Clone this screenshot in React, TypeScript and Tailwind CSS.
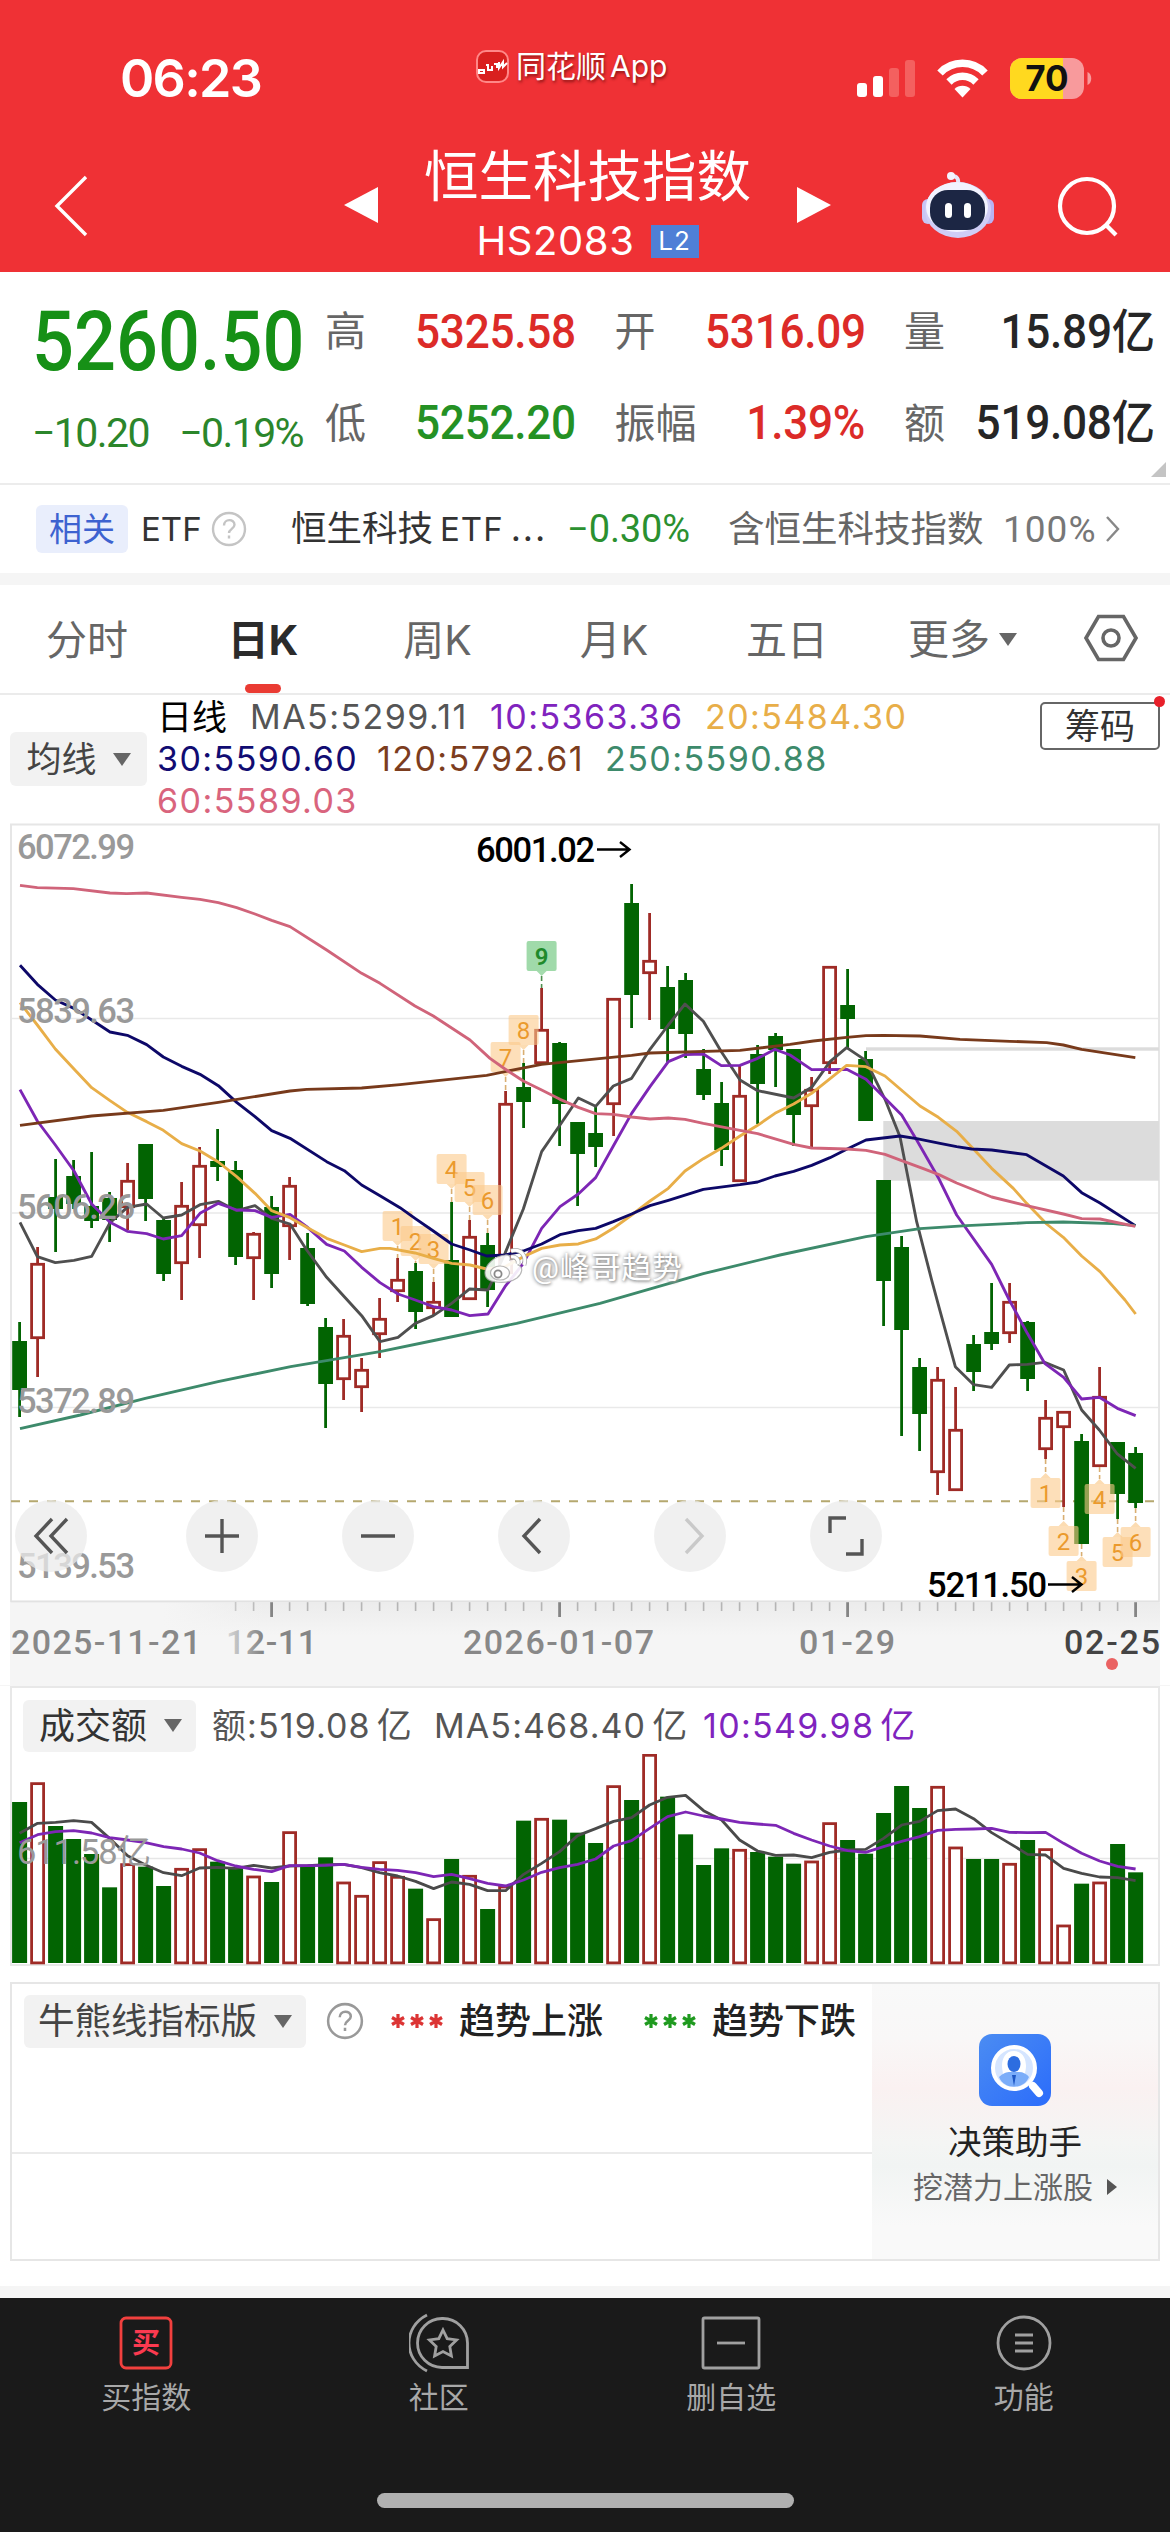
import React from "react";

type Candle = [up: 0 | 1, high: number, top: number, bottom: number, low: number];

const candles: Candle[] = [
  [0, 1322, 1341, 1390, 1417], [1, 1247, 1263, 1339, 1377], [0, 1159, 1197, 1209, 1252], [0, 1160, 1176, 1204, 1209],
  [0, 1152, 1206, 1221, 1228], [0, 1192, 1198, 1220, 1242], [1, 1163, 1180, 1208, 1230], [0, 1144, 1144, 1199, 1221],
  [0, 1217, 1220, 1274, 1281], [1, 1182, 1205, 1264, 1300], [1, 1147, 1165, 1226, 1258], [0, 1129, 1161, 1167, 1181],
  [0, 1161, 1170, 1257, 1265], [1, 1232, 1233, 1259, 1300], [0, 1196, 1207, 1274, 1288], [1, 1177, 1185, 1227, 1260],
  [0, 1233, 1248, 1304, 1306], [0, 1318, 1327, 1384, 1428], [1, 1319, 1335, 1380, 1400], [1, 1358, 1369, 1388, 1412],
  [1, 1298, 1318, 1335, 1358], [1, 1258, 1279, 1292, 1302], [0, 1263, 1271, 1312, 1329], [1, 1282, 1301, 1309, 1315],
  [0, 1202, 1260, 1317, 1317], [1, 1220, 1236, 1300, 1300], [0, 1233, 1245, 1290, 1307], [1, 1091, 1103, 1274, 1274],
  [0, 1063, 1087, 1102, 1128], [1, 988, 1029, 1064, 1064], [0, 1042, 1043, 1104, 1146], [0, 1122, 1122, 1154, 1206],
  [0, 1107, 1133, 1147, 1167], [1, 998, 998, 1105, 1136], [0, 884, 903, 995, 1028], [1, 913, 960, 974, 1020],
  [0, 966, 987, 1029, 1062], [0, 973, 980, 1034, 1058], [0, 1049, 1069, 1095, 1100], [0, 1082, 1103, 1150, 1166],
  [1, 1065, 1095, 1182, 1182], [0, 1045, 1054, 1084, 1124], [0, 1033, 1036, 1050, 1087], [0, 1049, 1049, 1115, 1146],
  [1, 1077, 1089, 1107, 1147], [1, 966, 966, 1064, 1074], [0, 969, 1005, 1019, 1048], [0, 1051, 1059, 1121, 1121],
  [0, 1180, 1180, 1281, 1326], [0, 1236, 1247, 1330, 1436], [0, 1358, 1367, 1414, 1451], [1, 1367, 1379, 1473, 1495],
  [1, 1387, 1429, 1491, 1491], [0, 1335, 1344, 1372, 1391], [0, 1283, 1332, 1344, 1350], [1, 1283, 1301, 1334, 1343],
  [0, 1321, 1322, 1379, 1391], [1, 1400, 1417, 1450, 1459], [1, 1411, 1411, 1428, 1507], [0, 1434, 1441, 1544, 1544],
  [1, 1367, 1396, 1467, 1467], [0, 1442, 1442, 1494, 1519], [0, 1447, 1453, 1503, 1508],
];

const volumes = [
  366, 307, 438, 477, 522, 622, 550, 560, 618, 564, 505, 545, 565, 587, 606, 454, 560, 532, 605, 645, 544, 588, 626, 715,
  537, 585, 687, 617, 422, 414, 419, 458, 489, 316, 360, 222, 350, 463, 555, 505, 507, 516, 530, 551, 542, 427, 480, 521,
  399, 318, 384, 318, 500, 537, 537, 549, 480, 505, 734, 611, 605, 492, 577,
];
const volMa5 = [
  460, 430, 427, 422, 427, 475, 527, 555, 578, 587, 564, 562, 565, 556, 564, 558, 557, 554, 553, 563, 578, 588, 604, 626,
  606, 613, 632, 632, 583, 550, 515, 467, 446, 424, 413, 375, 352, 346, 392, 420, 480, 513, 526, 525, 533, 517, 510, 508,
  475, 435, 424, 392, 387, 416, 458, 490, 523, 525, 565, 580, 591, 593, 602,
];
const volMa10 = [
  488, 464, 455, 452, 459, 473, 480, 488, 500, 507, 519, 542, 558, 568, 575, 557, 557, 556, 553, 562, 568, 571, 578, 590,
  583, 596, 610, 618, 600, 577, 563, 553, 537, 498, 482, 445, 410, 396, 408, 417, 427, 432, 436, 460, 480, 498, 512, 517,
  500, 484, 470, 451, 448, 447, 445, 457, 458, 457, 490, 520, 543, 559, 567,
];

const averages: { color: string; points: string }[] = [
  { color: "#4f4f4f", points: "60,1207 112,1310 166,1328 222,1321 275,1309 330,1208 382,1162 440,1152 490,1194 545,1185 600,1154 655,1144 710,1172 765,1157 815,1195 870,1212 920,1290 980,1372 1033,1430 1085,1487 1140,1565 1194,1552 1246,1510 1300,1487 1355,1450 1409,1407 1464,1410 1515,1300 1570,1167 1625,995 1680,915 1735,834 1787,859 1840,798 1895,775 1950,688 2005,615 2055,552 2110,604 2164,695 2220,780 2273,812 2381,834 2435,802 2490,725 2540,683 2598,722 2655,838 2700,950 2750,1205 2795,1380 2818,1465 2866,1640 2921,1694 2975,1702 3028,1635 3082,1633 3134,1627 3191,1650 3245,1770 3298,1830 3352,1902 3407,1945" },
  { color: "#7d26b5", points: "60,809 112,903 166,975 222,1053 275,1152 330,1207 382,1234 440,1241 490,1257 545,1247 600,1180 655,1150 710,1170 765,1172 815,1192 870,1183 920,1220 980,1273 1033,1293 1085,1342 1140,1388 1194,1422 1246,1440 1300,1460 1355,1470 1409,1487 1464,1482 1515,1400 1570,1330 1625,1225 1680,1160 1735,1122 1787,1073 1840,978 1895,880 1950,800 2005,725 2055,704 2110,702 2164,737 2220,736 2273,715 2325,688 2370,705 2435,749 2540,748 2598,778 2655,835 2705,885 2750,960 2815,1073 2870,1185 2975,1333 3028,1440 3082,1540 3134,1630 3191,1672 3245,1737 3298,1732 3352,1765 3407,1787" },
  { color: "#e8ae48", points: "60,548 112,615 166,687 222,747 275,803 330,842 382,877 440,905 490,931 545,971 600,993 655,1026 710,1070 765,1120 815,1172 870,1193 920,1222 980,1255 1033,1275 1085,1295 1140,1285 1170,1285 1245,1299 1300,1315 1355,1330 1410,1335 1460,1347 1515,1340 1570,1310 1625,1285 1680,1275 1735,1272 1787,1257 1840,1225 1895,1185 1950,1143 2005,1105 2055,1053 2110,1016 2164,985 2220,948 2273,916 2325,880 2381,852 2435,820 2540,736 2598,740 2655,768 2760,858 2815,892 2870,934 2975,1045 3040,1105 3080,1150 3140,1212 3190,1252 3245,1308 3300,1355 3375,1440 3407,1482" },
  { color: "#0d0868", points: "60,436 112,493 166,540 222,565 330,636 382,646 440,674 490,711 545,739 600,763 655,797 710,847 765,890 815,932 870,955 980,1025 1033,1052 1085,1095 1140,1127 1200,1163 1245,1195 1300,1233 1355,1272 1410,1290 1460,1308 1515,1305 1570,1293 1625,1272 1680,1244 1735,1232 1787,1225 1840,1205 1895,1182 1950,1157 2005,1141 2110,1108 2220,1094 2273,1086 2325,1068 2381,1054 2435,1036 2490,1013 2540,988 2598,960 2700,948 2750,956 2820,970 2870,980 2915,987 2975,990 3080,1004 3190,1068 3245,1118 3300,1149 3406,1217" },
  { color: "#783a1b", points: "60,916 275,888 490,871 655,847 870,813 920,808 1085,804 1200,794 1460,766 1625,733 1895,706 1950,699 2220,691 2370,673 2440,663 2540,652 2598,647 2650,646 2760,648 2880,658 3030,664 3140,668 3190,675 3245,688 3406,713" },
  { color: "#3d8a6b", points: "60,1826 241,1785 436,1735 654,1685 872,1640 1140,1595 1309,1560 1550,1510 1800,1450 2110,1361 2340,1305 2598,1250 2760,1226 2900,1217 3080,1208 3190,1206 3340,1211 3406,1217" },
  { color: "#d0647a", points: "60,196 112,203 220,206 330,219 380,221 440,219 545,232 600,238 655,248 710,263 765,282 815,301 870,320 980,390 1085,460 1140,490 1245,558 1300,588 1410,660 1470,715 1515,747 1570,783 1625,810 1680,838 1735,862 1787,881 1840,883 1895,891 1950,897 2005,894 2055,898 2110,910 2220,931 2273,941 2381,973 2435,984 2540,987 2598,991 2655,1003 2705,1022 2770,1046 2815,1063 2870,1089 2975,1131 3080,1157 3190,1182 3245,1196 3300,1197 3406,1219" },
];

const GREEN = "#026402";
const RED = "#9f2b26";
const barX = (i: number) => 19.6 + 18 * i;

const tags: [index: number, label: string, y: number, below: boolean][] = [
  [21, "1", 1226, false], [22, "2", 1241, false], [23, "3", 1249, false], [24, "4", 1169, false], [25, "5", 1187, false],
  [26, "6", 1200, false], [27, "7", 1057, false], [28, "8", 1030, false], [29, "9", 956, false],
  [57, "1", 1493, true], [58, "2", 1541, true], [59, "3", 1576, true], [60, "4", 1499, true], [61, "5", 1552, true], [62, "6", 1542, true],
];

function Tag({ index, label, y, below }: { index: number; label: string; y: number; below: boolean }) {
  const x = barX(index);
  const green = label === "9";
  const c = candles[index];
  const pointer = below ? `M${x - 5} ${y - 15}l5 -5l5 5z` : `M${x - 5} ${y + 15}l5 5l5 -5z`;
  return (
    <g>
      <path
        d={below ? `M${x} ${c[4]}V${y - 20}` : `M${x} ${y + 20}V${c[1]}`}
        stroke={green ? "#4d8f4d" : "#d9ae72"} strokeWidth="1.6" strokeDasharray="5 3"
      />
      <rect x={x - 15} y={y - 15} width="30" height="30" rx="2" fill={green ? "#8fd49b" : "#fbc98a"} fillOpacity={green ? 0.85 : 0.6} />
      <path d={pointer} fill={green ? "#a5dcae" : "#fcdcb2"} />
      <text x={x} y={y + 8.5} textAnchor="middle" fontSize="24" fontWeight={green ? 600 : 400} fill={green ? "#1f8a2b" : "#eb9a2d"}>{label}</text>
    </g>
  );
}

function PriceChart() {
  const axis: [string, number][] = [["6072.99", 858.5], ["5839.63", 1023], ["5606.26", 1218.5], ["5372.89", 1412.5], ["5139.53", 1577.5]];
  return (
    <svg className="block h-[865px] w-full font-['Roboto','Noto_Sans_CJK_SC',sans-serif]" viewBox="0 820 1170 865">
      <defs>
        <linearGradient id="strip" x1="0" y1="0" x2="0" y2="1">
          <stop offset="0" stopColor="#ececec" />
          <stop offset="0.4" stopColor="#f5f5f5" />
        </linearGradient>
        <linearGradient id="stripFade">
          <stop offset="0.6" stopColor="#f5f5f5" />
          <stop offset="1" stopColor="#f5f5f5" stopOpacity="0" />
        </linearGradient>
        <linearGradient id="dateFade" x1="0" y1="0" x2="1" y2="0">
          <stop offset="0" stopColor="#dadada" />
          <stop offset="0.4" stopColor="#858585" />
        </linearGradient>
      </defs>
      <rect x="11" y="824.5" width="1148" height="777" fill="#fff" stroke="#e6e6e6" strokeWidth="2" />
      <path d="M12 1018.5H1158M12 1213H1158M12 1407.5H1158" stroke="#e9e9e9" strokeWidth="1.5" />
      <rect x="866" y="1047.3" width="293" height="3.4" fill="#dcdcdc" />
      <rect x="883.3" y="1121" width="275.7" height="59.7" fill="#dcdcdc" />
      <path d="M11 1501.3H1158" stroke="#b5a86f" strokeWidth="2" strokeDasharray="9 9" />

      {candles.map(([up, high, top, bottom, low], i) => {
        const x = barX(i);
        return up ? (
          <g key={i} stroke={RED}>
            <path d={`M${x} ${high}V${top + 1}M${x} ${bottom - 1}V${low}`} strokeWidth="2.8" />
            <rect x={x - 6} y={top + 1.3} width="12" height={bottom - top - 2.6} fill="#fff" strokeWidth="2.8" />
          </g>
        ) : (
          <g key={i} fill={GREEN}>
            <rect x={x - 1.4} y={high} width="2.8" height={low - high} />
            <rect x={x - 7.4} y={top} width="14.8" height={bottom - top} />
          </g>
        );
      })}

      {tags.map(([index, label, y, below]) => <Tag key={`${index}`} index={index} label={label} y={y} below={below} />)}

      <g transform="translate(0 820) scale(0.33333)" fill="none" strokeWidth="8.600" strokeLinejoin="round">
        {averages.map((a) => <polyline key={a.color} points={a.points} stroke={a.color} />)}
      </g>

      <g fontSize="34.5" fontWeight="500" fill="#999">
        {axis.map(([label, y]) => <text key={label} x="17" y={y} textLength="118">{label}</text>)}
      </g>

      <g fontSize="34.5" fontWeight="500" fill="#000">
        <text x="476" y="861.5" textLength="119">6001.02</text>
        <text x="927" y="1596.5" textLength="120">5211.50</text>
      </g>
      <path d="M597 849.5H629M620 842L629.5 849.5L620 857M1048 1584.5H1081M1072 1577L1081.5 1584.5L1072 1592" stroke="#000" strokeWidth="2.4" fill="none" />

      <g>
        <g fill="#fff" fillOpacity="0.9" stroke="#a5a5a5" strokeOpacity="0.8" strokeWidth="1.2">
          <path d="M485 1273c0-8 9-17 20-18 4-1 6 2 5 5 5-2 10 0 8 5 6 2 4 9-1 13-8 6-32 7-32-5z" />
          <ellipse cx="500" cy="1273" rx="9.5" ry="7" />
        </g>
        <circle cx="498" cy="1274" r="3.6" fill="none" stroke="#888" strokeWidth="1.8" />
        <g fill="none">
          <path d="M511 1251c10-3 16 5 13 14M511 1257c5-1 8 3 7 7" stroke="#aaa" strokeWidth="4.6" />
          <path d="M511 1251c10-3 16 5 13 14M511 1257c5-1 8 3 7 7" stroke="#fff" strokeWidth="3" />
        </g>
        <text x="532" y="1277.5" fontSize="30" textLength="150" fill="#fff" className="[text-shadow:0_0_4px_#888,1px_1px_3px_#999]">@峰哥趋势</text>
      </g>

      <rect x="10" y="1602.5" width="1150" height="83" fill="url(#strip)" />
      {candles.map((_, i) => {
        if (i < 12) return null;
        const major = (i - 14) % 16 === 0;
        return <rect key={i} x={barX(i) - (major ? 1.4 : 0.8)} y="1602" width={major ? 2.8 : 1.6} height={major ? 15 : 9} fill={major ? "#858585" : "#b5b5b5"} />;
      })}
      <rect x="10" y="1602.5" width="255" height="83" fill="url(#stripFade)" />
      <path d="M11 1601.5H1159" stroke="#e2e2e2" strokeWidth="1.5" />
      <g fontSize="34" fontWeight="500" fill="#888">
        <text x="11" y="1654" textLength="190">2025-11-21</text>
        <text x="226" y="1653.5" textLength="91" fill="url(#dateFade)">12-11</text>
        <text x="463" y="1653.5" textLength="191">2026-01-07</text>
        <text x="799" y="1653.5" textLength="96">01-29</text>
        <text x="1064" y="1653.5" textLength="96" fill="#444">02-25</text>
      </g>
      <circle cx="1112" cy="1664" r="6" fill="#ea6262" />
    </svg>
  );
}

function VolumeChart() {
  const line = (values: number[]) => values.map((v, i) => `${barX(i)},${1680 + v / 3}`).join(" ");
  return (
    <svg className="block h-[211px] w-full" viewBox="0 1754 1170 211">
      <path d="M12 1858.5H1158" stroke="#e6e6e6" strokeWidth="1.5" />
      {volumes.map((v, i) => {
        const y = 1680 + v / 3;
        return candles[i][0] ? (
          <rect key={i} x={barX(i) - 6} y={y + 1.3} width="12" height={1961.6 - y} fill="#fff" stroke={RED} strokeWidth="2.8" />
        ) : (
          <rect key={i} x={barX(i) - 7.5} y={y} width="15" height={1963 - y} fill={GREEN} />
        );
      })}
      <g fill="none" strokeWidth="2.8" strokeLinejoin="round">
        <polyline points={line(volMa5)} stroke="#4a4a4a" />
        <polyline points={line(volMa10)} stroke="#7d26b5" />
      </g>
      <text x="17" y="1863.5" fontSize="34.5" textLength="134" fill="#999" className="font-['Roboto','Noto_Sans_CJK_SC',sans-serif]">611.58亿</text>
    </svg>
  );
}

function Caret({ className = "" }: { className?: string }) {
  return <svg className={`block h-[13px] w-[18px] shrink-0 ${className}`} viewBox="0 0 18 13"><path d="M0 0H18L9 13z" fill="#666" /></svg>;
}

function Help({ size, color }: { size: number; color: string }) {
  return (
    <svg width={size} height={size} viewBox="0 0 36 36" fill="none" stroke={color} strokeWidth="2.4" className="shrink-0">
      <circle cx="18" cy="18" r="16" />
      <path d="M13 14.5c0-7 10.500-7 10.500-.8 0 4-5.500 4.300-5.500 8.300M18 24.500v3" />
    </svg>
  );
}

function StatusBar() {
  return (
    <div className="flex h-[130px] items-start text-white">
      <div className="ml-[120px] mt-[53px] w-[356px] text-[52px] font-semibold leading-[52px] tracking-[-1.700px]">06:23</div>
      <div className="mt-[48px] flex h-9 w-[380px] items-center gap-[7px]">
        <svg className="size-[33px]" viewBox="0 0 33 33">
          <rect x="1" y="1" width="31" height="31" rx="9" fill="#d9201f" stroke="#f88" strokeWidth="2" />
          <path d="M3 20h5v3H3zM10 15h2v5h4v-4M18 14h3v4M23 12v6l4-6v5l4-4" fill="none" stroke="#fff" strokeWidth="2" />
        </svg>
        <span className="whitespace-nowrap text-[30px] leading-9 [text-shadow:1px_2px_3px_#8a1515]">同花顺<span className="ml-1 text-[30px]">App</span></span>
      </div>
      <svg className="mt-[56px] h-[44px] w-[240px]" viewBox="855 55 240 44">
        <rect x="856" y="82" width="10" height="14" rx="3" fill="#fff" />
        <rect x="872" y="75" width="10" height="21" rx="3" fill="#fff" />
        <rect x="888" y="67" width="10" height="29" rx="3" fill="#f4605f" />
        <rect x="904" y="59" width="10" height="37" rx="3" fill="#f4605f" />
        <g fill="none" stroke="#fff" strokeWidth="7.500">
          <path d="M939 72a31 31 0 0 1 45 0" />
          <path d="M948 81a19 19 0 0 1 27 0" />
        </g>
        <path d="M953.500 88a11.500 11.500 0 0 1 16 0l-8 8.500z" fill="#fff" />
        <rect x="1009" y="57" width="74" height="41" rx="12" fill="#f89a9c" />
        <path d="M1021 57h41v41h-41a12 12 0 0 1-12-12V69a12 12 0 0 1 12-12z" fill="#ffd91f" />
        <path d="M1086.500 71c5 2 5 11 0 13z" fill="#f89a9c" />
        <text x="1046" y="90" textAnchor="middle" fontSize="35" fontWeight="700" fill="#111">70</text>
      </svg>
    </div>
  );
}

function Robot() {
  return (
    <svg className="h-[72px] w-[74px]" viewBox="920 168 74 72">
      <path d="M957 184c1-6-1-9-6-9" stroke="#e6e8fa" strokeWidth="4" fill="none" />
      <circle cx="950" cy="175" r="4" fill="#f4f4ff" />
      <rect x="921" y="198" width="12" height="25" rx="6" fill="#c8c5f5" />
      <rect x="981" y="198" width="12" height="25" rx="6" fill="#b9b3f2" />
      <ellipse cx="957" cy="209" rx="33" ry="28" fill="#cfcdf6" />
      <ellipse cx="956" cy="206" rx="31" ry="25" fill="#f2f3ff" />
      <rect x="929" y="189" width="55" height="40" rx="18" fill="#1c2644" />
      <rect x="944" y="202" width="7" height="15" rx="3.500" fill="#fff" />
      <rect x="963" y="202" width="7" height="15" rx="3.500" fill="#fff" />
    </svg>
  );
}

function Header() {
  return (
    <header className="h-[272px] bg-[#ef3135]">
      <StatusBar />
      <div className="flex h-[142px] items-center pt-[7px] text-white">
        <svg className="ml-[52px] h-[64px] w-[38px]" viewBox="0 0 38 64"><path d="M34 4L5 33L34 62" fill="none" stroke="#fff" strokeWidth="3.400" /></svg>
        <svg className="ml-[254px] h-9 w-[34px]" viewBox="0 0 34 36"><path d="M34 0V36L0 18z" fill="#fff" /></svg>
        <div className="flex w-[419px] flex-col items-center self-start pt-[9px]">
          <h1 className="whitespace-nowrap text-[54.500px] leading-[60px]">恒生科技指数</h1>
          <div className="mt-[14px] flex items-center gap-4">
            <span className="text-[40px] leading-[42px] tracking-[0.600px]">HS2083</span>
            <span className="flex h-[33px] w-12 items-center justify-center bg-[#4f7fd6] text-[26px] leading-none tracking-[1px]">L2</span>
          </div>
        </div>
        <svg className="h-9 w-[34px]" viewBox="0 0 34 36"><path d="M0 0V36L34 18z" fill="#fff" /></svg>
        <div className="ml-[90px]"><Robot /></div>
        <svg className="ml-[61px] h-[64px] w-[64px]" viewBox="0 0 64 64" fill="none" stroke="#fff" strokeWidth="4.200">
          <circle cx="31" cy="33" r="27" /><path d="M50 52L60 62" />
        </svg>
      </div>
    </header>
  );
}

function Stat({ label, value, color }: { label: string; value: React.ReactNode; color: string }) {
  return (
    <div className="flex w-[251px] items-center justify-between">
      <span className="whitespace-nowrap text-[41px] leading-none text-[#666]">{label}</span>
      <span className={`origin-right scale-x-[0.92] whitespace-nowrap font-['Roboto','Noto_Sans_CJK_SC',sans-serif] text-[48px] font-medium leading-none tracking-[-0.300px] ${color}`}>{value}</span>
    </div>
  );
}

function Quote() {
  const yi = <span className="text-[47px]">亿</span>;
  return (
    <section className="flex h-[213px] border-b-2 border-[#ececec] bg-white">
      <div className="w-[325px] shrink-0 pl-8 font-['Roboto',sans-serif] text-[#169016]">
        <div className="mt-[28px] w-fit origin-left scale-x-[0.89] text-[83px] font-medium leading-[84px]">5260.50</div>
        <div className="mt-[28px] flex w-[271px] justify-between whitespace-nowrap text-[41px] leading-[42px] tracking-[-1.600px] text-[#2b862b]">
          <span>−10.20</span><span>−0.19%</span>
        </div>
      </div>
      <div className="grid h-[185px] shrink-0 grid-rows-2 pt-[18px]">
        <div className="flex items-center gap-[38.500px]">
          <Stat label="高" value="5325.58" color="text-[#dc2b28]" />
          <Stat label="开" value="5316.09" color="text-[#dc2b28]" />
          <Stat label="量" value={<>15.89{yi}</>} color="text-[#262626]" />
        </div>
        <div className="flex items-center gap-[38.500px] pt-4">
          <Stat label="低" value="5252.20" color="text-[#249124]" />
          <Stat label="振幅" value="1.39%" color="text-[#dc2b28]" />
          <Stat label="额" value={<>519.08{yi}</>} color="text-[#262626]" />
        </div>
      </div>
      <svg className="-ml-[4px] mb-1.5 h-[15px] w-[15px] shrink-0 self-end" viewBox="0 0 15 15"><path d="M15 0V15H0z" fill="#c4c4c4" /></svg>
    </section>
  );
}

function Related() {
  return (
    <section className="flex h-[88px] items-center whitespace-nowrap bg-white text-[35.500px] leading-none text-[#333]">
      <span className="ml-9 flex h-12 w-[92px] items-center justify-center rounded-md bg-[#e9eefc] text-[33px] text-[#3d62d0]">相关</span>
      <span className="ml-[13px] w-[70px] text-[33px]">ETF</span>
      <Help size={36} color="#c4c4c4" />
      <span className="ml-[44px] w-[276px]">恒生科技<span className="ml-[7px] text-[33px] tracking-[1px]">ETF</span><span className="ml-[7px] tracking-[2px]">...</span></span>
      <span className="w-[161px] font-['Roboto',sans-serif] text-[38px] tracking-[-0.100px] text-[#2b9030]">−0.30%</span>
      <span className="w-[275px] text-[36.500px] text-[#666]">含恒生科技指数</span>
      <span className="w-[102px] font-['Roboto',sans-serif] text-[37px] tracking-[1px] text-[#777]">100%</span>
      <svg className="h-7 w-4" viewBox="0 0 16 28"><path d="M2 2L13 14L2 26" fill="none" stroke="#888" strokeWidth="2.400" /></svg>
    </section>
  );
}

function Tabs() {
  const tabs = [
    ["分时", "w-[174px]"], ["日K", "w-[178px]"], ["周K", "w-[171px]"], ["月K", "w-[182px]"], ["五日", "w-[164px]"],
  ];
  return (
    <nav className="flex h-[110px] border-b-2 border-[#ebebeb] bg-white text-[41px] text-[#666]">
      {tabs.map(([t, w]) => (
        <div key={t} className={`flex flex-col items-center ${w} ${t === "日K" ? "font-bold text-[#2b2b2b]" : ""}`}>
          <span className="mt-[31px] whitespace-nowrap leading-[48px]">{t}</span>
          {t === "日K" && <i className="mt-[20px] h-[9px] w-9 rounded-full bg-[#ea3b33]" />}
        </div>
      ))}
      <div className="flex w-[215px] items-center justify-start pl-[39px]">
        <span className="whitespace-nowrap text-[41px] leading-none">更多</span><Caret className="ml-[9px]" />
      </div>
      <svg className="mt-[29px] h-[48px] w-[54px]" viewBox="0 0 54 48" fill="none" stroke="#666" strokeWidth="3.600">
        <path d="M14.500 2.500H39.500L52 24L39.500 45.500H14.500L2 24z" /><circle cx="27" cy="24" r="8" />
      </svg>
    </nav>
  );
}

function Legend() {
  return (
    <section className="flex h-[125px] bg-white text-[34px]">
      <button className="ml-2.5 mt-[37px] flex h-[54px] w-[137px] items-center justify-center rounded-md bg-[#f2f2f2] text-[#444]">
        <span className="mr-4 text-[35px] leading-none">均线</span><Caret />
      </button>
      <div className="ml-2.5 flex w-[883px] flex-col whitespace-nowrap leading-[42px] tracking-[1.450px]">
        <div className="flex pt-px">
          <span className="w-[93px] text-[35px] tracking-normal text-black">日线</span>
          <span className="w-[240px] text-[#555]">MA5:5299.11</span>
          <span className="w-[215px] text-[#8023be]">10:5363.36</span>
          <span className="text-[#e8ae48]">20:5484.30</span>
        </div>
        <div className="flex">
          <span className="w-[220px] text-[#110c72]">30:5590.60</span>
          <span className="w-[228px] text-[#7c3d1e]">120:5792.61</span>
          <span className="text-[#3d8a6b]">250:5590.88</span>
        </div>
        <div className="text-[#d9647d]">60:5589.03</div>
      </div>
      <div className="relative mt-[7px] flex h-12 w-[120px] items-center justify-center rounded-[5px] border-2 border-[#666] text-[35px] leading-none text-[#333]">
        筹码<i className="absolute -right-[7px] -top-[8px] size-[11px] rounded-full bg-[#e8202a]" />
      </div>
    </section>
  );
}

function ChartTools() {
  const icons: [string, string][] = [
    ["M51 -17L35 0L51 17M66 -17L50 0L66 17", "#555"], ["M33 0H67M50 -17V17", "#555"], ["M33 0H67", "#555"],
    ["M56 -17L40 0L56 17", "#555"], ["M46 -17L62 0L46 17", "#c9c9c9"], ["M34 -3V-18H50M66 3V18H50", "#555"],
  ];
  return (
    <div className="absolute left-[15px] top-[680px] flex">
      {icons.map(([d, color], i) => (
        <button key={i} className={`flex size-[72px] items-center justify-center rounded-full bg-[#ebebeb]/75 ${i === 0 ? "mr-[99px]" : "mr-[84px]"}`}>
          <svg className="size-[72px]" viewBox="14 -36 72 72"><path d={d} fill="none" stroke={color} strokeWidth="3.400" /></svg>
        </button>
      ))}
    </div>
  );
}

function Volume() {
  return (
    <section className="bg-white">
      <div className="mx-2.5 h-[280px] border-2 border-[#e8e8e8]">
        <div className="-mx-3 flex h-[66px] items-center pt-[9px] text-[34px] leading-none text-[#555]">
          <button className="ml-[23px] flex h-[52px] w-[173px] items-center rounded-md bg-[#f2f2f2] pl-4 text-[36px] leading-none text-[#333]">
            成交额<Caret className="ml-[17px]" />
          </button>
          <span className="ml-4 w-[222px] whitespace-nowrap tracking-[1.100px]">额:519.08<span className="ml-1.5 text-[35px]">亿</span></span>
          <span className="w-[269px] whitespace-nowrap tracking-[1.100px]">MA5:468.40<span className="ml-1.5 text-[35px]">亿</span></span>
          <span className="whitespace-nowrap tracking-[1.300px] text-[#8023be]">10:549.98<span className="ml-1.5 text-[35px]">亿</span></span>
        </div>
        <div className="-mx-3"><VolumeChart /></div>
      </div>
    </section>
  );
}

function Stars({ color }: { color: string }) {
  return (
    <svg className="h-4 w-[52px]" viewBox="0 0 52 16" stroke={color} strokeWidth="3.200">
      {[7, 26, 45].map((x) => <path key={x} d={`M${x} 1V15M${x - 6} 4.500L${x + 6} 11.500M${x + 6} 4.500L${x - 6} 11.500`} />)}
    </svg>
  );
}

function Trend() {
  return (
    <section className="bg-white px-2.5 pb-[25px] pt-[16px]">
      <div className="flex h-[279px] border-2 border-[#e6e6e6]">
        <div className="w-[860px]">
          <div className="flex h-[170px] items-start border-b-2 border-[#eaeaea] pl-3 pt-[11px] text-[36px] leading-none">
            <button className="flex h-[53px] w-[282px] items-center rounded-md bg-[#f2f2f2] pl-3.5 text-[36.500px] leading-none text-[#444]">
              牛熊线指标版<Caret className="ml-[17px]" />
            </button>
            <div className="flex h-[52px] items-center whitespace-nowrap font-medium text-[#222]">
              <div className="ml-5 mr-[27px]"><Help size={38} color="#999" /></div>
              <Stars color="#dc3434" /><span className="ml-[16px] mr-[41px]">趋势上涨</span>
              <Stars color="#1f9a1f" /><span className="ml-[16px]">趋势下跌</span>
            </div>
          </div>
        </div>
        <div className="flex flex-1 flex-col items-center bg-[linear-gradient(180deg,#f9f9f9_0%,#f9f7f7_20%,#faf1f1_38%,#f4f5f4_58%,#f1f4f3_66%,#f9f9f9_88%)] pt-[50px]">
          <svg className="size-[72px]" viewBox="0 0 72 72">
            <defs><linearGradient id="blue" x1="0" y1="0" x2="1" y2="1"><stop offset="0" stopColor="#4b8cf2" /><stop offset="1" stopColor="#2b6cfb" /></linearGradient></defs>
            <rect width="72" height="72" rx="13" fill="url(#blue)" />
            <circle cx="35" cy="34" r="21" fill="#d5e5ff" stroke="#fff" strokeWidth="4" />
            <path d="M35 17c9 0 12 8 12 15 0 5-2 8 0 9H23c2-1 0-4 0-9 0-7 3-15 12-15z" fill="#fff" />
            <path d="M20 43c4-4 8-5 11-5h9c4 0 8 2 10 5-5 13-25 13-30 0z" fill="#7badf9" />
            <ellipse cx="35" cy="30" rx="6.500" ry="8" fill="#2d6de0" />
            <path d="M33 41h4l-2 11z" fill="#1e57c4" />
            <path d="M54 52L60 59" stroke="#fff" strokeWidth="8" strokeLinecap="round" />
          </svg>
          <div className="mt-[17px] text-[33.500px] leading-[38px] text-[#222]">决策助手</div>
          <div className="mt-[8px] flex items-center text-[30px] leading-[36px] text-[#666]">
            挖潜力上涨股
            <svg className="ml-3.5 h-4 w-2.5" viewBox="0 0 10 16"><path d="M0 0L10 8L0 16z" fill="#555" /></svg>
          </div>
        </div>
      </div>
    </section>
  );
}

function BottomNav() {
  const items = [
    {
      label: "买指数",
      icon: (
        <>
          <rect x="5" y="5" width="50" height="50" rx="5" stroke="#f2403e" />
          <text x="30" y="40" textAnchor="middle" fontSize="28" fontWeight="700" fill="#fb3a50" stroke="none">买</text>
        </>
      ),
    },
    {
      label: "社区",
      icon: (
        <>
          <path d="M34 5.500H33a24.500 24.500 0 0 0 0 49H58.500V30A24.500 24.500 0 0 0 34 5.500z" />
          <path d="M18 2C-6 14 -6 46 18 58" />
          <path d="M34 17l4.200 8.600 9.400 1.300-6.800 6.600 1.600 9.400-8.400-4.400-8.400 4.400 1.600-9.400-6.800-6.600 9.400-1.300z" />
        </>
      ),
    },
    { label: "删自选", icon: <><rect x="2" y="5" width="56" height="50" rx="1.500" /><path d="M16 30H44" /></> },
    { label: "功能", icon: <><circle cx="30" cy="30" r="26" /><path d="M21 22H39M21 30H39M21 38H39" /></> },
  ];
  return (
    <nav className="flex h-[234px] flex-col items-center bg-[#1a1a1a]">
      <div className="grid h-[195px] w-full grid-cols-4 pt-[15px]">
        {items.map((item) => (
          <div key={item.label} className="flex flex-col items-center text-[30px] leading-[36px] text-[#a8a8a8]">
            <svg className="mb-1.5 size-[60px]" viewBox="0 0 60 60" fill="none" stroke="#a0a0a0" strokeWidth="2.800">{item.icon}</svg>
            {item.label}
          </div>
        ))}
      </div>
      <div className="h-[15px] w-[417px] rounded-full bg-[#b0b0b0]" />
    </nav>
  );
}

export default function App() {
  return (
    <main className="h-[2532px] w-[1170px] overflow-hidden bg-white font-['Inter','Noto_Sans_CJK_SC',sans-serif]">
      <Header />
      <Quote />
      <Related />
      <div className="h-3 bg-[#f5f5f5]" />
      <Tabs />
      <Legend />
      <div className="relative">
        <PriceChart />
        <ChartTools />
      </div>
      <div className="h-px bg-[#f5f5f5]" />
      <Volume />
      <Trend />
      <div className="h-3 bg-[#f5f5f5]" />
      <BottomNav />
    </main>
  );
}
